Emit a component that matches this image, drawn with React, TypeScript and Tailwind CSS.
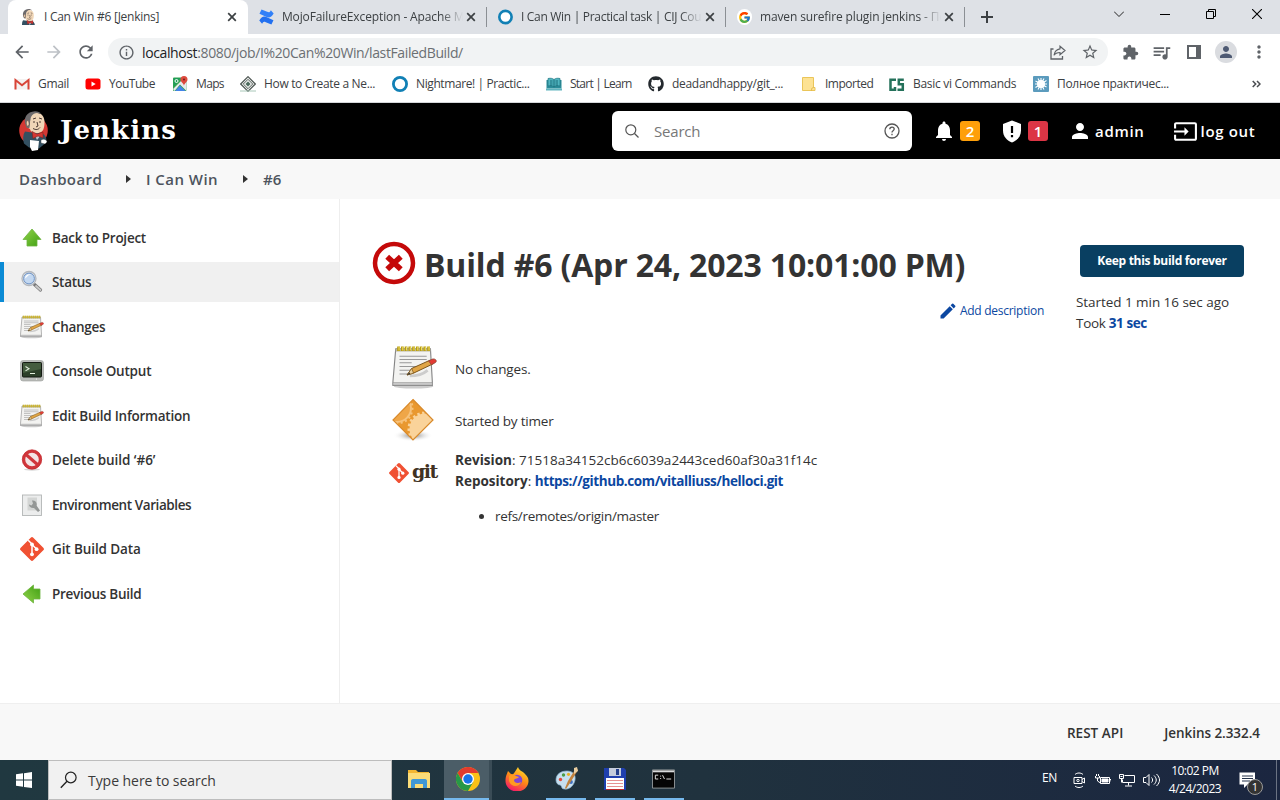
import React from "react";
import {
  MdArrowBack,
  MdArrowForward,
  MdRefresh,
  MdInfoOutline,
  MdStarBorder,
  MdExtension,
  MdQueueMusic,
  MdPerson,
  MdMoreVert,
  MdNotifications,
  MdEdit,
  MdInput,
} from "react-icons/md";
import { FaGithub } from "react-icons/fa";
import { FcGoogle } from "react-icons/fc";

const Butler = ({ className, backdrop }: { className: string; backdrop?: boolean }) => (
  <svg className={className} viewBox={backdrop ? "0 0 30 40" : "1 0 28 29"}>
    {backdrop && <ellipse cx="14.5" cy="19.500" rx="14.300" ry="14.500" fill="#d33833" />}
    <path d="M6 20.500l7 1 5-1 7 3c3 3 3 7 1 9l-6 5-10-1-5-4c-1.500-4-1-9 1-12z" fill="#335061" />
    <path d="M9 8c1-5 5-7 9-6 5 0 7.500 4 7.500 9 0 6-1 10-6 11-4 1-8-1-8.500-4-4-2-4-6-2-10z" fill="#f0d6b7" />
    <path d="M7 15C3.500 7 8 .5 16 .2c3 0 5 1 6 2.500-3-1-5-1-7 0-2.500 1.500-3.500 3.500-3.500 6-1 2 0 4-1 8-1.500 1-3.500 0-3.500-1.700z" fill="#6d6b6d" />
    <path d="M8 9.500c2 0 2 2 2 4l-1 2c-2-1-2-4-1-6z" fill="#f0d6b7" stroke="#6b4a38" strokeWidth=".5" />
    <path d="M14 8l3-1m3 0l3 1m-9 3h2m4 0h2m-4 0l1 4-2 1m-3 1.500c3 1.500 5 1.500 7-1" stroke="#4b3a33" strokeWidth="1" fill="none" />
    <path d="M15 23l3 6 4-5" fill="#b9c3cb" />
    <path d="M13 20.500l5 2.500 6-2v6l-5-2-5 2.500z" fill="#d33833" stroke="#81221f" strokeWidth=".6" />
    {backdrop && <path d="M11 29l9 1-1 9-6 1-2-4z" fill="#fff" />}
    {backdrop && <path d="M22 29c3-2 6 0 6 2l-2 2-4-1z" fill="#fff" stroke="#333" strokeWidth=".4" />}
  </svg>
);

const Notepad = ({ className }: { className: string }) => (
  <svg className={className} viewBox="0 0 48 48">
    <ellipse cx="23" cy="44" rx="21" ry="2.5" fill="#ccc" />
    <path d="M4 4h37l2 35v4H1v-4z" fill="#f3f3f1" stroke="#858585" strokeWidth="1.2" />
    <path d="M1 40h42v3H1z" fill="#c8c8c8" stroke="#888" strokeWidth=".5" />
    <path d="M4 4h37v3H4z" fill="#bbb8a0" />
    <path d="M7 1.500v5M11 1.500v5M15 1.500v5M19 1.500v5M23 1.500v5M27 1.500v5M31 1.500v5M35 1.500v5M39 1.500v5" stroke="#b79c12" strokeWidth="3" />
    <path d="M7.500 1.800v4M11.500 1.800v4M15.500 1.800v4M19.500 1.800v4M23.500 1.800v4M27.500 1.800v4M31.500 1.800v4M35.500 1.800v4M39.500 1.800v4" stroke="#f4e56a" strokeWidth="1" />
    <path d="M8 12h29M8 15.500h29M8 19h13M8 23h29M8 27h20M8 31h11" stroke="#999" strokeWidth="1.100" />
    <path d="M19 33c7 0 13-1 19-6" stroke="#ccc" strokeWidth="3" fill="none" />
    <path d="M16 32l5-7 20-9 3 4-21 10z" fill="#e0a546" stroke="#775014" strokeWidth="1" />
    <path d="M16 32l5-7 2 5z" fill="#e8cf9c" stroke="#775014" strokeWidth=".7" />
    <path d="M16 32l2.500-3 1 1.800z" fill="#333" />
    <path d="M39 17l4-2c3-1 6 2 3 4l-4 2z" fill="#e23b34" stroke="#8b4a3c" strokeWidth=".8" />
  </svg>
);

const GitMark = ({ className }: { className: string }) => (
  <svg className={className} viewBox="0 0 24 24">
    <path d="M10.700.7L.7 10.700a1.800 1.800 0 000 2.600l10 10a1.800 1.800 0 002.600 0l10-10a1.800 1.800 0 000-2.600l-10-10a1.800 1.800 0 00-2.600 0z" fill="#f05133" />
    <path d="M8.200 3.200L12 7v10.500M12 7.500l4.800 4.800" stroke="#fff" strokeWidth="1.500" fill="none" />
    <circle cx="12" cy="7.400" r="1.900" fill="#fff" />
    <circle cx="12" cy="17.300" r="1.900" fill="#fff" />
    <circle cx="16.600" cy="12.200" r="1.900" fill="#fff" />
  </svg>
);

const GreenArrow = ({ className }: { className: string }) => (
  <svg className={className} viewBox="0 0 24 24">
    <defs>
      <linearGradient id="leaf" x1="0" y1="0" x2="1" y2="1">
        <stop offset="0" stopColor="#93d44b" />
        <stop offset="1" stopColor="#3f9f12" />
      </linearGradient>
    </defs>
    <path d="M12 3l9 10.500h-4V20H7v-6.500H3z" fill="url(#leaf)" stroke="#6db43f" strokeWidth=".8" />
  </svg>
);

const Magnifier = () => (
  <svg className="size-6" viewBox="0 0 24 24">
    <path d="M14.500 14.500l6 5.500" stroke="#777" strokeWidth="3.200" strokeLinecap="round" />
    <path d="M16 16l4.500 4" stroke="#c9c9c9" strokeWidth="1.800" strokeLinecap="round" />
    <circle cx="9" cy="8.500" r="7" fill="#dfe3e8" stroke="#b4b8bd" strokeWidth="1.300" />
    <circle cx="9" cy="8.500" r="5.400" fill="#c3d8f1" stroke="#6e93c5" strokeWidth="1" />
    <path d="M5 8.500c0-3 3-5 6-4-3 0-4 3-6 4z" fill="#fff" />
  </svg>
);

const Terminal = () => (
  <svg className="size-6" viewBox="0 0 24 24">
    <rect x=".5" y="1.500" width="23" height="20.500" rx="2.500" fill="#b9bbb8" stroke="#9b9d9a" strokeWidth=".6" />
    <rect x="2.500" y="3.500" width="19" height="14.500" rx=".8" fill="#2c3f29" stroke="#141b12" />
    <path d="M3 4h18v6L3 14z" fill="#55704c" opacity=".6" />
    <path d="M5.500 7.500l3.500 2.200-3.500 2.200M10 14.500h5" stroke="#e4f0df" strokeWidth="1.100" fill="none" />
    <circle cx="16.500" cy="20" r=".6" fill="#fff" />
  </svg>
);

const NoEntry = () => (
  <svg className="size-6" viewBox="0 0 24 24">
    <ellipse cx="12" cy="21.500" rx="8" ry="1.200" fill="#d8d8d8" />
    <circle cx="12" cy="11.500" r="8.300" fill="#f3e4e4" stroke="#d0363b" strokeWidth="3" />
    <path d="M6 6.500l12 10.500" stroke="#d0363b" strokeWidth="3" />
    <circle cx="12" cy="11.500" r="9.700" fill="none" stroke="#c2252a" strokeWidth=".7" />
  </svg>
);

const Wrench = () => (
  <svg className="size-6" viewBox="0 0 24 24">
    <rect x="2.500" y="2" width="19" height="20.500" fill="#eceded" stroke="#b3b5b5" strokeWidth=".9" />
    <rect x="7.500" y="4.500" width="9.500" height="13" fill="#d3d5d4" />
    <path d="M9 11.500l2.500 1 1.500-2-1-3c3-.6 5.500 2 4.500 5l3.500 5-2 1.500-4-4c-2.500.6-5-1.200-5-3.500z" fill="#949796" />
  </svg>
);

const GearDiamond = () => (
  <svg className="h-[44px] w-[44px]" viewBox="0 0 44 44">
    <defs>
      <radialGradient id="soft">
        <stop offset="0" stopColor="#777" />
        <stop offset="1" stopColor="#fff" stopOpacity="0" />
      </radialGradient>
      <clipPath id="dia">
        <path d="M22 1.500L42 22 22 42 2 22z" />
      </clipPath>
    </defs>
    <ellipse cx="22" cy="37.500" rx="20" ry="6" fill="url(#soft)" />
    <g clipPath="url(#dia)">
      <path d="M0 0h44v44H0z" fill="#e9982f" />
      <circle cx="6" cy="10" r="14" fill="#efa648" stroke="#f6c27c" strokeWidth="2" />
      <circle cx="6" cy="10" r="15.500" fill="none" stroke="#f6c27c" strokeWidth="2" strokeDasharray="2 2.600" />
      <circle cx="34" cy="31" r="15.500" fill="#fad39a" />
      <circle cx="34" cy="31" r="16" fill="none" stroke="#fad39a" strokeWidth="3" strokeDasharray="2.400 2.400" />
    </g>
    <path d="M22 1.500L42 22 22 42 2 22z" fill="none" stroke="#d98a2b" strokeWidth="1.200" />
  </svg>
);

const FailedBall = () => (
  <svg className="size-[44px]" viewBox="0 0 44 44">
    <circle cx="22" cy="22" r="19" fill="#fff" stroke="#c40909" strokeWidth="4.500" />
    <path d="M15.200 15.700l13.600 12.600M28.800 15.700L15.200 28.300" stroke="#c40909" strokeWidth="5.600" />
  </svg>
);

const Close = ({ className }: { className: string }) => (
  <svg className={className} viewBox="0 0 10 10">
    <path d="M1.200 1.200l7.600 7.600M8.800 1.200L1.200 8.800" stroke="#3c4043" strokeWidth="1.700" />
  </svg>
);

const Ring = () => (
  <svg className="size-4" viewBox="0 0 16 16">
    <circle cx="8" cy="8" r="6.600" fill="#fff" stroke="#1180b5" strokeWidth="2.800" />
  </svg>
);

const Confluence = () => (
  <svg className="size-4" viewBox="0 0 16 16">
    <path d="M.3 11.800C3 7 5.500 6.800 9 8.500l6.500 3-2.200 4.500-6-2.500C5 12.500 4.500 13 3.300 15.200z" fill="#2270f0" />
    <path d="M15.700 4.200C13 9 10.500 9.200 7 7.500L.5 4.500 2.700 0l6 2.500c2.300 1 2.800.5 4-1.700z" fill="#3180f8" />
  </svg>
);

const GmailIcon = () => (
  <svg className="size-4" viewBox="0 0 16 16">
    <path d="M.5 3h15v10.500H.5z" fill="#f4f1f0" />
    <path d="M1.500 13.500V4L8 9.300 14.500 4v9.500" fill="none" stroke="#d84437" strokeWidth="2" />
  </svg>
);

const YoutubeIcon = () => (
  <svg className="size-4" viewBox="0 0 16 16">
    <rect x=".5" y="2.500" width="15" height="11" rx="2.500" fill="#f00" />
    <path d="M6.500 5.500v5L10.700 8z" fill="#fff" />
  </svg>
);

const MapsIcon = () => (
  <svg className="size-4" viewBox="0 0 16 16">
    <rect x="1" y="1.500" width="13.500" height="13.500" rx="1" fill="#35a351" />
    <path d="M1 13L12 2l2.500 3v10L8 8.500 2.500 15z" fill="#e8eaed" />
    <path d="M8 9.500l5.500 5.500H3z" fill="#4283e8" />
    <path d="M1.500 2h7L1.500 11z" fill="#1f9d58" />
    <circle cx="4.500" cy="5" r="1.500" fill="none" stroke="#fff" />
    <path d="M12 10c0-3-3.500-3.500-3.500-6.500a3.500 3.500 0 017 0C15.500 6.500 12 7 12 10z" fill="#dd4b3e" />
    <circle cx="12" cy="3.500" r="1.100" fill="#7d231c" />
  </svg>
);

const DiamondIcon = () => (
  <svg className="size-4" viewBox="0 0 16 16">
    <path d="M8 .7L15.300 8 8 15.300.7 8z" fill="#eef0ee" stroke="#4d5552" strokeWidth="1.200" />
    <path d="M8 3.300L12.700 8 8 12.700 3.300 8z" fill="none" stroke="#59625e" strokeWidth="1" />
    <path d="M8 5.500L10.500 8 8 10.500 5.500 8z" fill="#4d6a5d" />
    <path d="M0 15h16" stroke="#a8c7b8" />
  </svg>
);

const BookIcon = () => (
  <svg className="size-4" viewBox="0 0 16 16">
    <path d="M.5 12.500V4h15v8.500z" fill="#2b8c99" />
    <path d="M2 2.500c3-.7 4.500 0 6 1 1.500-1 3-1.700 6-1V10c-3-.5-4.500 0-6 1-1.500-1-3-1.500-6-1z" fill="#50b5c0" stroke="#1f7682" strokeWidth=".7" />
    <path d="M8 3.500V11M4 5h2.500M4 7h2.500M4 9h2.500m3-4H12M9.500 7H12M9.500 9H12" stroke="#146572" strokeWidth=".9" />
    <path d="M0 13.500h16" stroke="#60b4be" strokeWidth="2" />
  </svg>
);

const FolderIcon = () => (
  <svg className="size-4" viewBox="0 0 16 16">
    <path d="M1.500 1.500h11v10h1.500v3H1.500z" fill="#fde293" stroke="#eac559" strokeWidth="1" />
    <path d="M10.500 14.500c0-1.500.5-3 2-3" fill="none" stroke="#dfb443" />
  </svg>
);

const CsIcon = () => (
  <svg className="size-4" viewBox="0 0 16 16">
    <path d="M7 3.700H1.500v10H6V11M14.800 3.700h-5v4.500h4v5.500H8.500" fill="none" stroke="#24715a" strokeWidth="2.500" />
  </svg>
);

const SplatIcon = () => (
  <svg className="size-4" viewBox="0 0 16 16">
    <rect width="16" height="16" rx="1" fill="#5b9bbd" />
    <path d="M8 2v12M2.500 5l11 6M13.500 4.500l-11 7M2 8h12M5 2.500l6 11M11 2.500l-6 11" stroke="#fff" strokeWidth="1.100" />
    <circle cx="8" cy="8" r="4" fill="#fff" />
  </svg>
);

const tabs = [
  { icon: <Butler className="h-4 w-4" />, title: "I Can Win #6 [Jenkins]", pos: "w-[240px]", active: true, text: "tracking-[-0.27px]" },
  { icon: <Confluence />, title: "MojoFailureException - Apache Maven", pos: "w-[239px]", text: "tracking-[-0.12px]" },
  { icon: <Ring />, title: "I Can Win | Practical task | CIJ Course", pos: "w-[239px]", text: "tracking-[-0.3px]" },
  {
    icon: (
      <span className="flex size-4 items-center justify-center rounded-full bg-white">
        <FcGoogle size={13} />
      </span>
    ),
    title: "maven surefire plugin jenkins - Поиск",
    pos: "w-[239px]",
    text: "tracking-[-0.13px]",
  },
];

const bookmarks = [
  { icon: <GmailIcon />, label: "Gmail", box: "w-[71px]", text: "tracking-[-0.3px]" },
  { icon: <YoutubeIcon />, label: "YouTube", box: "w-[87px]", text: "tracking-[-0.48px]" },
  { icon: <MapsIcon />, label: "Maps", box: "w-[68px]", text: "tracking-[-0.65px]" },
  { icon: <DiamondIcon />, label: "How to Create a Ne...", box: "w-[152px]", text: "tracking-[-0.33px]" },
  { icon: <Ring />, label: "Nightmare! | Practic...", box: "w-[154px]", text: "tracking-[-0.4px]" },
  { icon: <BookIcon />, label: "Start | Learn", box: "w-[102px]", text: "tracking-[-0.75px]" },
  { icon: <FaGithub size={16} color="#24292e" />, label: "deadandhappy/git_...", box: "w-[153px]", text: "tracking-[-0.3px]" },
  { icon: <FolderIcon />, label: "Imported", box: "w-[88px]", text: "tracking-[-0.5px]" },
  { icon: <CsIcon />, label: "Basic vi Commands", box: "w-[144px]", text: "tracking-[-0.3px]" },
  { icon: <SplatIcon />, label: "Полное практичес...", box: "w-[219px]", text: "tracking-[-0.3px]" },
];

function BrowserChrome() {
  return (
    <div className="h-[103px] shrink-0 border-b border-[#d5d7da] bg-white">
      <div className="flex h-[34px] bg-[#dee1e6] pl-2">
        {tabs.map((t) => (
          <div
            key={t.title}
            className={`flex items-center ${t.pos} ${t.active ? "rounded-t-lg bg-white pl-3" : "pl-[11px]"}`}
          >
            {t.icon}
            <span
              className={`ml-2 overflow-hidden whitespace-nowrap text-[12px] text-[#3c4043] ${t.text} ${
                t.active ? "w-[180px]" : "w-[194px] [mask-image:linear-gradient(to_right,black_88%,transparent)]"
              }`}
            >
              {t.title}
            </span>
            <Close className="ml-[3px] size-2.5 shrink-0" />
            {!t.active && <span className="ml-[10px] h-5 w-px shrink-0 bg-[#8b8f94]" />}
          </div>
        ))}
        <svg className="ml-4 mt-[11px] size-3" viewBox="0 0 12 12">
          <path d="M6 0v12M0 6h12" stroke="#3c4043" strokeWidth="2" />
        </svg>
        <div className="ml-auto mr-[18px] mt-[9px] flex">
          <svg className="mr-9 size-2.5" viewBox="0 0 10 10">
            <path d="M0 2.500l5 5 5-5" fill="none" stroke="#222" />
          </svg>
          <svg className="mr-9 size-2.5" viewBox="0 0 10 10">
            <path d="M0 5.500h10" stroke="#000" />
          </svg>
          <svg className="mr-9 size-2.5" viewBox="0 0 10 10">
            <path d="M.5 2.500h7v7h-7zM2.500 2V.5h7v7H8" fill="none" stroke="#000" />
          </svg>
          <svg className="size-2.5" viewBox="0 0 10 10">
            <path d="M0 0l10 10M10 0L0 10" stroke="#000" strokeWidth="1.100" />
          </svg>
        </div>
      </div>
      <div className="flex h-9 items-center pl-3 text-[#5f6368]">
        <MdArrowBack size={20} />
        <MdArrowForward size={20} className="ml-3 text-[#bdc1c6]" />
        <MdRefresh size={20} className="ml-3" />
        <div className="ml-3 flex h-7 w-[1000px] items-center rounded-full bg-[#f1f3f4] pl-[10px] pr-[9px]">
          <MdInfoOutline size={17} />
          <span className="ml-[7px] whitespace-nowrap text-[14px] tracking-[-0.38px] text-[#6b6f73]">
            <span className="text-[#202124]">localhost</span>:8080/job/I%20Can%20Win/lastFailedBuild/
          </span>
          <svg className="ml-auto size-4" viewBox="0 0 16 16">
            <path d="M3.500 5H1v10h11.500v-3" fill="none" stroke="#5f6368" strokeWidth="1.300" />
            <path d="M10 2.200l5 4.300-5 4.300V8.500c-3 0-4.800.8-6 2.800.5-3.500 2.500-6 6-6.500z" fill="none" stroke="#5f6368" strokeWidth="1.200" />
          </svg>
          <MdStarBorder size={18} className="ml-[15px]" />
        </div>
        <MdExtension size={17} className="ml-[14px]" />
        <MdQueueMusic size={21} className="ml-[12px]" />
        <svg className="ml-[15px] size-[14px]" viewBox="0 0 14 14">
          <path d="M1 1h12v12H1z" fill="none" stroke="#5f6368" strokeWidth="2" />
          <path d="M9 0h5v14H9z" fill="#5f6368" />
        </svg>
        <span className="ml-[14px] flex size-[22px] items-center justify-center rounded-full bg-[#dadce0]">
          <MdPerson size={18} className="text-[#4e5a73]" />
        </span>
        <MdMoreVert size={20} className="ml-[12px]" />
      </div>
      <div className="flex h-7 items-center pl-3.5">
        {bookmarks.map((b) => (
          <div key={b.label} className={`flex shrink-0 items-center gap-2 ${b.box}`}>
            {b.icon}
            <span className={`whitespace-nowrap text-[12px] text-[#3c4043] ${b.text}`}>{b.label}</span>
          </div>
        ))}
        <svg className="h-2 w-[9px]" viewBox="0 0 9 8">
          <path d="M.7 1l3 3-3 3M5 1l3 3-3 3" fill="none" stroke="#4a4d51" strokeWidth="1.500" />
        </svg>
      </div>
    </div>
  );
}

function Header() {
  return (
    <header className="flex h-14 shrink-0 items-center bg-black text-white">
      <Butler backdrop className="ml-[19px] h-10 w-[30px] shrink-0" />
      <span className="ml-[11px] mt-[-3px] w-[552px] font-['DejaVu_Serif',serif] text-[26px] font-bold leading-8 tracking-[1.1px]">
        Jenkins
      </span>
      <div className="flex h-10 w-[300px] items-center rounded-md bg-white pl-3 pr-3 text-[#63666b]">
        <svg className="size-4" viewBox="0 0 16 16">
          <circle cx="6.800" cy="6.800" r="5" fill="none" stroke="#555" strokeWidth="1.200" />
          <path d="M10.500 10.500l4 4" stroke="#555" strokeWidth="1.300" />
        </svg>
        <span className="ml-[14px] text-[15px] tracking-[-0.2px] text-[#777]">Search</span>
        <svg className="ml-auto size-4" viewBox="0 0 16 16">
          <circle cx="8" cy="8" r="7" fill="none" stroke="#555" strokeWidth="1.300" />
          <path d="M5.800 6.300c0-3 4.400-2.800 4.400-.2 0 1.600-2.200 1.600-2.200 3.300M8 10.800v1.500" fill="none" stroke="#555" strokeWidth="1.300" />
        </svg>
      </div>
      <MdNotifications size={24} className="ml-5" />
      <span className="ml-1 flex h-5 w-5 items-center justify-center rounded-[3px] bg-[#fe9f0a] text-[15px] font-semibold">2</span>
      <svg className="ml-[22px] h-[23px] w-5" viewBox="0 0 20 23">
        <path d="M10 .5l9 3.500v6.500c0 6-4 10-9 12-5-2-9-6-9-12V4z" fill="#fff" />
        <path d="M10 6v7M10 15v2.200" stroke="#000" strokeWidth="2.200" />
      </svg>
      <span className="ml-[6px] flex h-5 w-5 items-center justify-center rounded-[3px] bg-[#dc3545] text-[15px] font-semibold">1</span>
      <MdPerson size={24} className="ml-5" />
      <span className="ml-[3px] text-[15px] font-semibold tracking-[0.7px]">admin</span>
      <MdInput size={25} className="ml-[28px]" />
      <span className="ml-[3px] whitespace-nowrap text-[15px] font-semibold tracking-[0.65px]">log out</span>
    </header>
  );
}

function Breadcrumbs() {
  const arrow = (
    <svg className="h-2 w-[5px]" viewBox="0 0 5 8">
      <path d="M0 0l5 4-5 4z" fill="#333" />
    </svg>
  );
  return (
    <nav className="flex h-10 shrink-0 items-center bg-[#f8f8f8] pl-[19px] text-[15px] font-semibold text-[#4d545d]">
      <span className="w-[107px] tracking-[0.4px]">Dashboard</span>
      {arrow}
      <span className="ml-[15px] w-[97px] tracking-[0.45px]">I Can Win</span>
      {arrow}
      <span className="ml-[15px]">#6</span>
    </nav>
  );
}

const links = [
  { icon: <GreenArrow className="size-6" />, label: "Back to Project", text: "tracking-[-0.25px]" },
  { icon: <Magnifier />, label: "Status", active: true, text: "tracking-[-0.3px]" },
  { icon: <Notepad className="size-6" />, label: "Changes", text: "tracking-[-0.3px]" },
  { icon: <Terminal />, label: "Console Output", text: "tracking-[-0.2px]" },
  { icon: <Notepad className="size-6" />, label: "Edit Build Information", text: "tracking-[-0.25px]" },
  { icon: <NoEntry />, label: "Delete build ‘#6’", text: "tracking-[-0.03px]" },
  { icon: <Wrench />, label: "Environment Variables", text: "tracking-[-0.42px]" },
  { icon: <GitMark className="size-6" />, label: "Git Build Data", text: "tracking-[-0.1px]" },
  { icon: <GreenArrow className="size-6 -rotate-90" />, label: "Previous Build", text: "tracking-[-0.27px]" },
];

function Sidebar() {
  return (
    <aside className="flex w-[340px] shrink-0 flex-col gap-[4.500px] border-r border-[#eeeeee] pt-[18.500px]">
      {links.map((l) => (
        <a
          key={l.label}
          className={`flex h-10 items-center gap-2 border-l-4 pl-4 text-[13.500px] font-semibold text-[#333] ${l.text} ${
            l.active ? "border-[#0b8bd5] bg-[#f0f0f0]" : "border-transparent"
          }`}
        >
          {l.icon}
          <span className="pt-px">{l.label}</span>
        </a>
      ))}
    </aside>
  );
}

function Build() {
  return (
    <main className="flex min-w-0 flex-1 text-[13.500px] text-[#333]">
      <div className="w-[704px] pl-8 pt-[42px]">
        <div className="flex h-[44px] items-center gap-[8px]">
          <FailedBall />
          <h1 className="mt-1 whitespace-nowrap text-[32px] font-bold leading-10 tracking-[-0.16px]">
            Build #6 (Apr 24, 2023 10:01:00 PM)
          </h1>
        </div>
        <div className="mt-[14px] flex h-6 items-center justify-end gap-[2px] text-[12px] text-[#0b47a1]">
          <MdEdit size={20} />
          <span className="tracking-[-0.27px]">Add description</span>
        </div>
        <div className="mt-[21px] grid grid-cols-[83px_1fr]">
          <div className="flex h-[50px] pl-[19px] pt-px">
            <Notepad className="h-[45px] w-[47px]" />
          </div>
          <div className="pt-[15px] leading-5 tracking-[-0.15px]">No changes.</div>
          <div className="flex h-[56px] pl-[19px] pt-[4px]">
            <GearDiamond />
          </div>
          <div className="pt-[17px] leading-5 tracking-[-0.2px]">Started by timer</div>
          <div className="flex h-[60px] items-start pl-[17px] pt-[13px]">
            <GitMark className="size-5" />
            <span className="ml-[3px] mt-[-4px] font-['DejaVu_Serif',serif] text-[19px] font-bold leading-6 tracking-[-1.5px] text-[#413223]">
              git
            </span>
          </div>
          <div className="leading-[21px]">
            <p className="whitespace-nowrap tracking-[0.02px]">
              <b>Revision</b>: 71518a34152cb6c6039a2443ced60af30a31f14c
            </p>
            <p className="whitespace-nowrap">
              <b>Repository</b>: <b className="tracking-[-0.4px] text-[#0b47a1]">https://github.com/vitalliuss/helloci.git</b>
            </p>
            <ul className="mt-[14px] list-disc pl-10">
              <li className="tracking-[-0.3px]">refs/remotes/origin/master</li>
            </ul>
          </div>
        </div>
      </div>
      <div className="pl-8 pt-[46px]">
        <button className="ml-1 flex h-8 w-[164px] items-center justify-center rounded-[4px] bg-[#093f61] text-[12px] font-bold tracking-[-0.3px] text-white">
          Keep this build forever
        </button>
        <p className="mt-[15px] leading-[21px] tracking-[-0.05px]">Started 1 min 16 sec ago</p>
        <p className="leading-[21px] tracking-[-0.3px]">
          Took <b className="text-[#0b47a1] tracking-[-0.45px]">31 sec</b>
        </p>
      </div>
    </main>
  );
}

const Explorer = () => (
  <svg className="size-6" viewBox="0 0 24 24">
    <path d="M1 3h8l2 2h11v15H1z" fill="#f2b632" />
    <path d="M1 6h22v15H1z" fill="#fbdc78" />
    <path d="M4 21v-7c0-1 .5-2 2-2h12c1.500 0 2 1 2 2v7h-4v-4H8v4z" fill="#3f97d5" />
  </svg>
);

const Chrome = () => (
  <svg className="ml-[2px] size-6" viewBox="0 0 24 24">
    <circle cx="12" cy="12" r="12" fill="#fbc116" />
    <path d="M1.600 6A12 12 0 0122.400 6H12L7 15z" fill="#e33b2e" />
    <path d="M1.600 6A12 12 0 0012 24l5.200-9H6.800z" fill="#279847" />
    <circle cx="12" cy="12" r="6" fill="#fff" />
    <circle cx="12" cy="12" r="4.700" fill="#1a73e8" />
  </svg>
);

const Firefox = () => (
  <svg className="size-6" viewBox="0 0 24 24">
    <defs>
      <linearGradient id="fire" x1=".8" y1="0" x2=".3" y2="1">
        <stop offset="0" stopColor="#ffe32e" />
        <stop offset=".5" stopColor="#ff8a16" />
        <stop offset="1" stopColor="#f5156c" />
      </linearGradient>
    </defs>
    <path d="M13 0c1 4 5 4 7 7 2 2 3.500 3.500 3.500 7A11.500 10.500 0 01.500 14C.5 9 2 7 3 4l3 3 2 .2C9.500 6 11 3 13 0z" fill="url(#fire)" />
    <circle cx="12" cy="13" r="5.300" fill="#8044d4" />
    <path d="M4 9c3-2 5-1 7 0l3 1c-1 2-4 1-5 3 0 3 4 4 7 2-1 5-10 6-12-1z" fill="#ff9a22" />
  </svg>
);

const Paint = () => (
  <svg className="size-6" viewBox="0 0 24 24">
    <path d="M2 13C2 7 7 4 13 4c6 0 9 4 8 9s-5 10-11 9c-3 0-2-4-4-4s-4-2-4-5z" fill="#c7dfef" stroke="#8ab3d0" strokeWidth=".7" />
    <circle cx="6.500" cy="12.500" r="1.700" fill="#de4a3b" />
    <circle cx="9.500" cy="8" r="1.700" fill="#4a9c47" />
    <circle cx="14.500" cy="7.300" r="1.600" fill="#e9af27" />
    <circle cx="17" cy="15" r="1.900" fill="#3f71c5" />
    <path d="M22 1l2 2-8 13-4 6-1-1 3-7z" fill="#c0823e" />
    <path d="M20 1l3-1 1 4-4 3z" fill="#e8cda1" />
  </svg>
);

const Floppy = () => (
  <svg className="size-6" viewBox="0 0 24 24">
    <path d="M1 1h20l2 2v20H1z" fill="#1f3fae" />
    <path d="M6 1h12v8H6z" fill="#c4ccdc" />
    <path d="M13 2h3v6h-3z" fill="#24408c" />
    <path d="M3 11h18v12H3z" fill="#fff" />
    <path d="M4 13.500h16M4 16.500h16M4 19.500h16" stroke="#e69191" strokeWidth="1.200" />
    <path d="M3 22.500h18" stroke="#c12c2c" strokeWidth="1" />
  </svg>
);

const Cmd = () => (
  <svg className="h-[20px] w-[23px]" viewBox="0 0 24 20">
    <path d="M.5.5h23v19H.5z" fill="#050505" stroke="#8f9598" />
    <path d="M1 1h22v2H1z" fill="#d8dadb" />
    <path d="M6.500 6H3.500v4h3M9 6.500v1M9 9v1M11 6l2 4M15 10h5" stroke="#e3e3e3" fill="none" />
  </svg>
);

const apps = [
  { id: "explorer", icon: <Explorer />, box: "w-[50px]", bar: "" },
  { id: "chrome", icon: <Chrome />, box: "w-[48px] border-r-[3px] border-[#3a4c56] bg-[#4b5d67]", bar: "w-[45px]" },
  { id: "firefox", icon: <Firefox />, box: "w-[49px]", bar: "" },
  { id: "paint", icon: <Paint />, box: "w-[49px]", bar: "w-10" },
  { id: "floppy", icon: <Floppy />, box: "w-[49px]", bar: "w-10" },
  { id: "cmd", icon: <Cmd />, box: "w-[49px]", bar: "w-10" },
];

function Taskbar() {
  return (
    <div className="flex h-10 shrink-0 items-center bg-linear-to-r from-[#203840] via-[#20323e] via-55% to-[#1b2640] text-white">
      <div className="flex w-12 justify-center">
        <svg className="size-4" viewBox="0 0 16 16">
          <path d="M0 2.300L7 1.300V7.600H0zM8 1.200L16 0v7.600H8zM0 8.500h7v6.200l-7-1zM8 8.500h8V16l-8-1.100z" fill="#fff" />
        </svg>
      </div>
      <div className="flex h-10 w-[344px] items-center border border-[#bdbdbd] bg-[#f1f1f1] pl-[11px]">
        <svg className="size-[18px]" viewBox="0 0 18 18">
          <circle cx="10.800" cy="6.500" r="5.300" fill="none" stroke="#222" strokeWidth="1.200" />
          <path d="M7 10.300L.8 16.800" stroke="#222" strokeWidth="1.400" />
        </svg>
        <span className="ml-[10px] text-[14px] tracking-[-0.05px] text-[#3a3a3a]">Type here to search</span>
      </div>
      <div className="ml-[2px] flex h-10">
        {apps.map((a) => (
          <div key={a.id} className={`flex flex-col items-center ${a.box}`}>
            <div className="flex h-[38px] items-center">{a.icon}</div>
            <div className={`h-0.5 bg-[#76b9ed] ${a.bar}`} />
          </div>
        ))}
      </div>
      <span className="ml-auto mt-[-4px] text-[12px] tracking-[-0.3px]">EN</span>
      <svg className="ml-[14px] size-4" viewBox="0 0 16 16" fill="none" stroke="#fff">
        <path d="M3 5.500h8v6H3zM11 7.500l2.500-1.500v5L11 9.500M4 2.500c2-2 6-2 8 0M4 14c2 2 6 2 8 0" />
        <circle cx="7" cy="8.500" r="1.200" />
      </svg>
      <svg className="ml-2 size-4" viewBox="0 0 16 16" fill="none" stroke="#fff">
        <path d="M5.500 5.500h9v6h-9zM14.500 7.500h1.500v2M.5 4v2h4V4M2.500 6v3l3 2M1.500 2v2M3.500 2v2" />
        <path d="M7 7h6v3H7z" fill="#fff" />
      </svg>
      <svg className="ml-2 size-4" viewBox="0 0 16 16" fill="none" stroke="#fff">
        <path d="M5.500 3.500h10v7h-12v-3M9.500 10.500v3M6 14h7M.5 2.500h4v4h-4zM1.500 4.500h2M2.500 6.500v4" />
      </svg>
      <svg className="ml-2 h-4 w-[18px]" viewBox="0 0 18 16" fill="none" stroke="#fff">
        <path d="M.5 5.500h2.500l3-3v11l-3-3H.500zM8.500 5.500c1.500 1.500 1.500 3.500 0 5M11 3.500c3 3 3 6 0 9M13.500 2c4 4 4 8 0 12" />
      </svg>
      <div className="ml-[5px] flex w-[58px] flex-col items-center text-[12px] leading-[18px] tracking-[-0.5px]">
        <span className="whitespace-nowrap">10:02 PM</span>
        <span>4/24/2023</span>
      </div>
      <div className="relative ml-[15px] mr-[15px] size-[22px]">
        <svg className="mt-[3px] size-[17px]" viewBox="0 0 17 17">
          <path d="M.5.500h15.500v12H8.500L5 16v-3.500H.5z" fill="#fff" />
          <path d="M3 4h11M3 6.500h11M3 9h8" stroke="#24324a" strokeWidth="1.100" />
        </svg>
        <span className="absolute left-[8px] top-[10px] flex size-4 items-center justify-center rounded-full border border-[#9a9a9a] bg-[#333] text-[11px]">
          1
        </span>
      </div>
      <span className="mr-[3px] h-10 w-px bg-[#6b7383]" />
    </div>
  );
}

export default function App() {
  return (
    <div className="flex h-[800px] w-[1280px] flex-col overflow-hidden bg-white font-['Open_Sans','Noto_Sans',sans-serif]">
      <BrowserChrome />
      <Header />
      <Breadcrumbs />
      <div className="flex h-[504px] shrink-0">
        <Sidebar />
        <Build />
      </div>
      <footer className="flex h-[57px] shrink-0 items-center justify-end gap-[41px] border-t border-[#efefef] bg-[#f8f8f8] pr-5 pt-[3px] text-[13.500px] font-semibold text-[#333]">
        <span className="tracking-[0.05px]">REST API</span>
        <span className="tracking-[-0.06px]">Jenkins 2.332.4</span>
      </footer>
      <Taskbar />
    </div>
  );
}
